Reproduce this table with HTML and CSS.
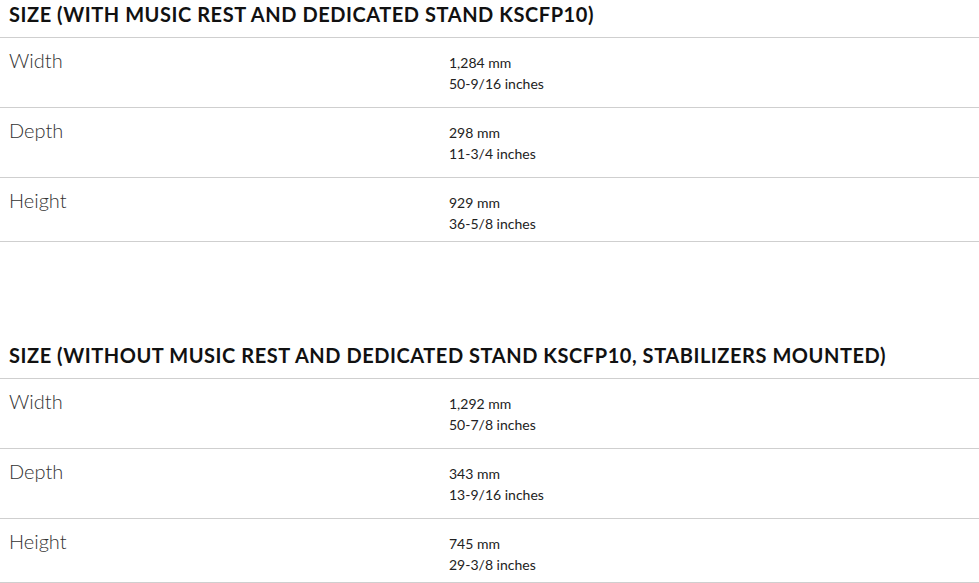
FILE: index.html
```html
<!DOCTYPE html>
<html lang="en">
<head>
<meta charset="utf-8">
<title>Size specifications</title>
<link rel="stylesheet" href="styles.css">
</head>
<body>
<section class="spec">
  <h2 class="spec-title">SIZE (WITH MUSIC REST AND DEDICATED STAND KSCFP10)</h2>
  <div class="spec-row">
    <div class="spec-label">Width</div>
    <div class="spec-value"><div>1,284 mm</div><div>50-9/16 inches</div></div>
  </div>
  <div class="spec-row">
    <div class="spec-label">Depth</div>
    <div class="spec-value"><div>298 mm</div><div>11-3/4 inches</div></div>
  </div>
  <div class="spec-row">
    <div class="spec-label">Height</div>
    <div class="spec-value"><div>929 mm</div><div>36-5/8 inches</div></div>
  </div>
</section>
<section class="spec">
  <h2 class="spec-title">SIZE (WITHOUT MUSIC REST AND DEDICATED STAND KSCFP10, STABILIZERS MOUNTED)</h2>
  <div class="spec-row">
    <div class="spec-label">Width</div>
    <div class="spec-value"><div>1,292 mm</div><div>50-7/8 inches</div></div>
  </div>
  <div class="spec-row">
    <div class="spec-label">Depth</div>
    <div class="spec-value"><div>343 mm</div><div>13-9/16 inches</div></div>
  </div>
  <div class="spec-row">
    <div class="spec-label">Height</div>
    <div class="spec-value"><div>745 mm</div><div>29-3/8 inches</div></div>
  </div>
</section>
</body>
</html>
```

FILE: styles.css
```css
html, body {
  margin: 0;
  padding: 0;
  background: #fff;
}
body {
  font-family: Lato, "Liberation Sans", Arial, sans-serif;
  color: #222;
  width: 979px;
}
.spec + .spec {
  margin-top: 99px;
}
.spec-title {
  margin: 0;
  padding: 2px 0 0 9px;
  height: 35px;
  box-sizing: content-box;
  font-size: 20px;
  line-height: 24px;
  font-weight: 700;
  color: #111;
  border-bottom: 1px solid #cfcfcf;
  letter-spacing: 0.55px;
  white-space: nowrap;
}
.spec-row {
  display: grid;
  grid-template-columns: 440px 1fr;
  align-items: baseline;
  padding: 14px 0 13px 9px;
  border-bottom: 1px solid #cfcfcf;
}
.spec-row:last-child {
  padding-bottom: 7px;
}
.spec-label {
  font-size: 20px;
  line-height: 16px;
  font-weight: 300;
  color: #333;
}
.spec-value {
  font-size: 14px;
  line-height: 21px;
  color: #222;
}
```
